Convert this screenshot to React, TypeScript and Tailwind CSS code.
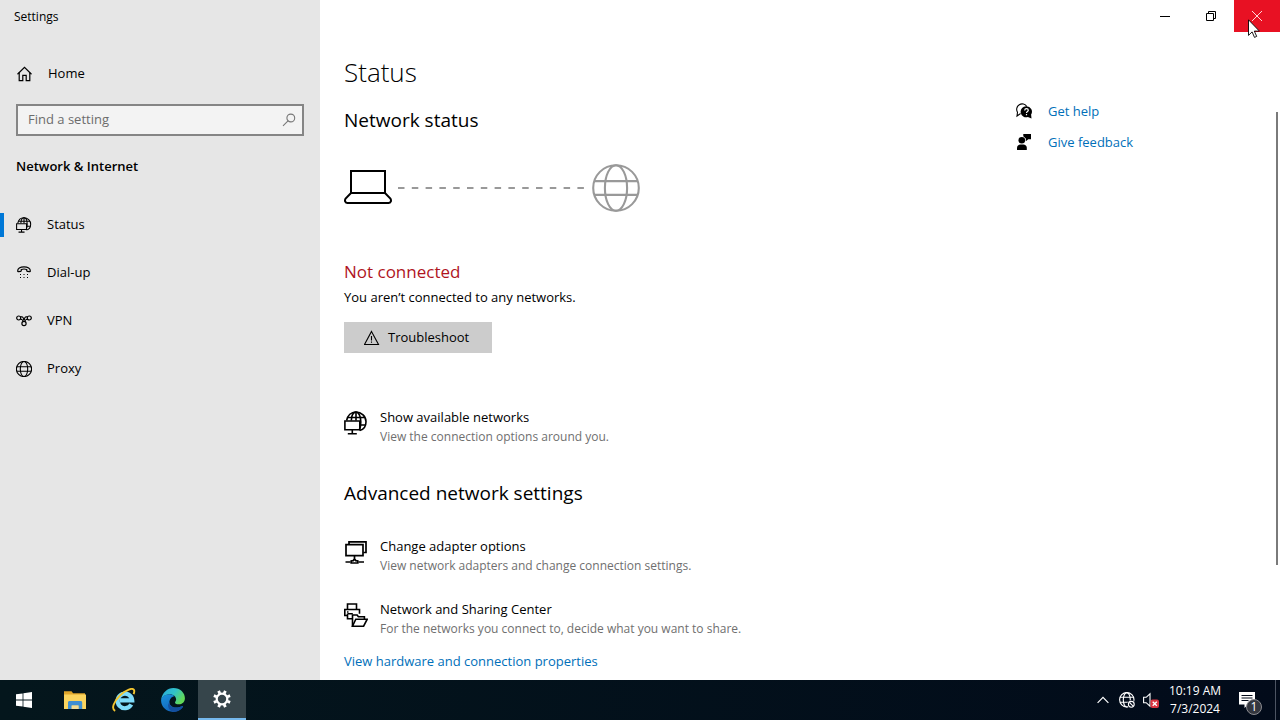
import type { ReactNode } from 'react';

type IconProps = { className?: string };

function HomeIcon({ className }: IconProps) {
  return (
    <svg viewBox="0 0 16 16" className={className} fill="none" stroke="currentColor" strokeWidth="1.200">
      <path d="M1.500 8.200 8.500 1.300l7 6.900" />
      <path d="M3.200 6.600v8h3.600V9.400h3.400v5.200h3.600v-8" />
    </svg>
  );
}

function SearchIcon({ className }: IconProps) {
  return (
    <svg viewBox="0 0 14 14" className={className} fill="none" stroke="currentColor" strokeWidth="1.1">
      <circle cx="8.8" cy="5" r="3.9" />
      <path d="M6 7.8 1 12.8" />
    </svg>
  );
}

function NetworkGlobeIcon({ className }: IconProps) {
  return (
    <svg viewBox="0 0 24 24" className={className} fill="none" stroke="currentColor" strokeWidth="1.600">
      <path d="M2.600 9.500C3.600 4.500 7.200 1 11.800 1 17.500 1 22 5.300 22 10.700c0 4.400-2.600 7.800-6.300 8.900" />
      <path d="M7.300 9.500C7.500 4.700 9.300 1.100 12 1.100S16.800 5.400 16.800 11c0 3.600-.6 6.300-1.600 8.100" />
      <path d="M12 1.100v8.400M3.800 6.500h17.300M15.800 14h5.500" />
      <path d="M.9 10h14.900v8.700H.9zM8.300 18.700v3.500M3.800 22.700h9" />
    </svg>
  );
}

function DialUpIcon({ className }: IconProps) {
  return (
    <svg viewBox="0 0 16 16" className={className} fill="none" stroke="currentColor" strokeWidth="1.200">
      <path d="M1.700 6C1.600 3.600 4 1.900 8 1.900S14.400 3.600 14.300 6c0 .6-.4.8-.9.700l-2-.4c-.5-.1-.7-.4-.7-.9v-.9c-1.600-.6-3.800-.6-5.400 0v.9c0 .5-.2.8-.7.900l-2 .4c-.5.1-.9-.1-.9-.7Z" />
      <path
        d="M4 9.500h1M7.500 9.500h1M11 9.500h1M4 12.500h1M7.500 12.500h1M11 12.500h1"
        strokeWidth="1"
      />
    </svg>
  );
}

function VpnIcon({ className }: IconProps) {
  return (
    <svg viewBox="0 0 16 16" className={className} fill="none" stroke="currentColor" strokeWidth="1.200">
      <circle cx="2.700" cy="5" r="2" />
      <circle cx="13.300" cy="5" r="2" />
      <path d="M4.300 3.700 6.500 4l3.300 4.300M11.700 3.700 9.500 4 6.200 8.300M4.400 6.300l2 .2M11.600 6.300l-2 .2" />
      <circle cx="8" cy="10.500" r="2.100" />
    </svg>
  );
}

function GlobeIcon({ className, strokeWidth = 1.1 }: IconProps & { strokeWidth?: number }) {
  return (
    <svg viewBox="0 0 16 16" className={className} fill="none" stroke="currentColor" strokeWidth={strokeWidth}>
      <circle cx="8" cy="8" r="7.600" />
      <ellipse cx="8" cy="8" rx="3.700" ry="7.600" />
      <path d="M.8 5.700h14.400M.8 10.300h14.400" />
    </svg>
  );
}

function LaptopIcon({ className }: IconProps) {
  return (
    <svg viewBox="0 0 48 48" className={className} fill="none" stroke="currentColor" strokeWidth="2">
      <path d="M7 29V7h34v22" />
      <path d="M7 29h34l5.400 5.600c1.300 2.200.3 4.400-1.900 4.400h-41c-2.200 0-3.200-2.200-1.900-4.400Z" />
    </svg>
  );
}

function WarningIcon({ className }: IconProps) {
  return (
    <svg viewBox="0 0 16 16" className={className} fill="none" stroke="currentColor" strokeWidth="1.100">
      <path d="M7.500 1.500 14.500 14.500H.5Z" />
      <path d="M7.500 6v4.500M7.500 11.600v1.200" />
    </svg>
  );
}

function AdapterIcon({ className }: IconProps) {
  return (
    <svg viewBox="0 0 24 24" className={className} fill="none" stroke="currentColor" strokeWidth="1.700">
      <path d="M5 4V1.800h17v10.700h-2.600" />
      <path d="M2 4.600h17v11H2zM10.500 15.600v3M1.500 22h5M14.500 22h5.500" />
      <path d="M7.200 23v-2.100l2-.3 1.300-1.700 1.300 1.700 2 .3V23z" />
    </svg>
  );
}

function SharingIcon({ className }: IconProps) {
  return (
    <svg viewBox="0 0 24 24" className={className} fill="none" stroke="currentColor" strokeWidth="1.600">
      <path d="M3.500 6.500V1h9v5.500M3.500 12.500H.8v-6h14.700v4.300M3 9h1.500" />
      <path d="M3.500 10.800h5.300M3.500 10.800v5h4.600" />
      <path d="M8.500 23.200V12h4.600l1.300 1.800h6v2.400" />
      <path d="M8.500 23.200 11.800 16.200h11.400l-3.600 7z" />
    </svg>
  );
}

function HelpIcon({ className }: IconProps) {
  return (
    <svg viewBox="0 0 16 16" className={className} fill="none" stroke="currentColor">
      <path d="M4.600 10.500 1 13l.5-3.800A5.300 5.300 0 1 1 10.800 3.500" strokeWidth="1.100" />
      <path
        d="M10.400 3.200a5.500 5.500 0 0 1 4.700 8.400l.4 4-3.600-1.700a5.500 5.500 0 1 1-1.500-10.700Z"
        fill="currentColor"
        stroke="none"
      />
      <path d="M8.700 7.400c0-2.300 3.600-2.200 3.600-.1 0 1.300-1.800 1.300-1.800 2.700M10.500 11v1.300" stroke="white" strokeWidth="1.200" />
    </svg>
  );
}

function FeedbackIcon({ className }: IconProps) {
  return (
    <svg viewBox="0 0 16 16" className={className} fill="currentColor">
      <circle cx="5.800" cy="6.200" r="3.300" />
      <path d="M1 16v-2.200c0-2 1.500-3.400 3.500-3.400h2.800c2 0 3.500 1.400 3.500 3.400V16Z" />
      <path d="M7.300 0H15v5.200h-2.700L9.800 7.200V4.500L7.300 2.200Z" />
    </svg>
  );
}

function WindowsLogo() {
  return (
    <svg viewBox="0 0 16 16" className="size-4" fill="white">
      <path d="M0 2.300 6.600 1.400v6.200H0ZM7.400 1.300 16 0v7.600H7.400ZM0 8.400h6.600v6.200L0 13.700ZM7.400 8.400H16V16l-8.600-1.300Z" />
    </svg>
  );
}

function ExplorerLogo() {
  return (
    <svg viewBox="0 0 24 24" className="size-6">
      <path d="M1 3.200h7.500l1.600 2H22v4H1Z" fill="#e0a52a" />
      <path d="M1 6.500h22V21H1Z" fill="#fbd45e" />
      <path d="M5 21v-6.500c0-1 .6-1.600 1.600-1.600h11c1 0 1.600.6 1.600 1.600V21h-3.700v-3.500H8.700V21Z" fill="#3f8fd2" />
      <path d="M8.700 17.500h6.800V21H8.700Z" fill="#f3dc94" />
    </svg>
  );
}

function InternetExplorerLogo() {
  return (
    <svg viewBox="0 0 24 24" className="size-6" fill="none">
      <path d="M19.300 16.500a7.300 7.300 0 1 1 .9-4.200H8" stroke="#7fdcfa" strokeWidth="4.200" />
      <path
        d="M3.200 22.800C-1 21 1.500 13.600 8.200 7.200 14 1.700 20.700-.6 22 2c.5 1 .3 2.500-.4 4.200"
        stroke="#f3c52f"
        strokeWidth="1.900"
      />
    </svg>
  );
}

function EdgeLogo() {
  return (
    <svg viewBox="0 0 24 24" className="size-[26px]">
      <defs>
        <linearGradient id="edgeTop" x1="0" y1="0" x2="1" y2="0.500">
          <stop offset="0" stopColor="#2aa5e0" />
          <stop offset="0.550" stopColor="#30c3c8" />
          <stop offset="1" stopColor="#62d957" />
        </linearGradient>
        <linearGradient id="edgeBody" x1="0" y1="0" x2="0.600" y2="1">
          <stop offset="0" stopColor="#1b93dd" />
          <stop offset="1" stopColor="#1160b8" />
        </linearGradient>
      </defs>
      <path
        d="M1 11.500C2.300 5.200 6.700 1 12.400 1 18.700 1 23 5.500 23 10.400c0 3.400-2.500 5.600-5.600 5.600-2.500 0-3.900-.9-3.500-1.900.5-.9 1-1.600 1-2.700 0-2.600-2.500-4.800-6-4.800-3.700 0-6.500 2-7.900 4.900Z"
        fill="url(#edgeTop)"
      />
      <path
        d="M1 12.800C.9 9.300 4.200 6.600 8.900 6.600c2 0 3.500.8 4.500 1.900-3 .4-4.700 3-4.700 5.600 0 4.300 5.500 6.400 11.600 3.600.7-.3 1.200.2.800.8A11.300 11.300 0 0 1 12.200 23C5.900 23 1.100 18.500 1 12.800Z"
        fill="url(#edgeBody)"
      />
      <path d="M8.700 14.100c0 4.300 5.500 6.400 11.600 3.600.7-.3 1.200.2.800.8-2 3.300-5.400 4.500-8 4.500-4.600-.6-7.300-5.500-4.400-8.900Z" fill="#144f9e" />
    </svg>
  );
}

function GearIcon() {
  const teeth = [0, 45, 90, 135, 180, 225, 270, 315];
  return (
    <svg viewBox="0 0 20 20" className="size-5" fill="none" stroke="white">
      <circle cx="10" cy="10" r="5.300" strokeWidth="2.200" />
      {teeth.map((angle) => (
        <path key={angle} d="M10 4.200V1.200" strokeWidth="2.800" transform={`rotate(${angle + 22.5} 10 10)`} />
      ))}
    </svg>
  );
}

const navItems = [
  { label: 'Status', icon: <NetworkGlobeIcon className="size-4" />, active: true },
  { label: 'Dial-up', icon: <DialUpIcon className="size-4" /> },
  { label: 'VPN', icon: <VpnIcon className="size-4" /> },
  { label: 'Proxy', icon: <GlobeIcon className="size-4" /> },
];

function Sidebar() {
  return (
    <aside className="w-80 shrink-0 bg-[#e6e6e6]">
      <div className="flex h-[34px] items-center pl-[14px] text-xs">Settings</div>
      <a href="#home" className="mt-5 flex h-10 items-center gap-4 pl-4">
        <HomeIcon className="size-4" />
        Home
      </a>
      <form className="mx-4 mt-[10px] flex h-8 items-center border-2 border-[#858585] bg-[#f3f3f3] pr-[6px] pl-[10px]">
        <input
          type="text"
          aria-label="Find a setting"
          placeholder="Find a setting"
          className="min-w-0 flex-1 bg-transparent outline-none placeholder:text-[#6c6c6c]"
        />
        <SearchIcon className="size-[14px] text-[#777]" />
      </form>
      <h2 className="mt-5 pl-4 leading-5 font-semibold">Network &amp; Internet</h2>
      <nav className="mt-[25px]">
        {navItems.map((item) => (
          <a key={item.label} href={`#${item.label.toLowerCase()}`} className="flex h-12 items-center">
            <span className={item.active ? 'h-6 w-1 bg-[#0078d7]' : 'h-6 w-1'} />
            <span className="mr-[15px] ml-3">{item.icon}</span>
            {item.label}
          </a>
        ))}
      </nav>
    </aside>
  );
}

function WindowControls() {
  return (
    <div className="flex h-8 justify-end">
      <button type="button" aria-label="Minimize" className="grid w-[46px] place-items-center">
        <svg viewBox="0 0 10 10" className="size-[10px]" stroke="black">
          <path d="M0 5.500h10" />
        </svg>
      </button>
      <button type="button" aria-label="Restore" className="grid w-[46px] place-items-center">
        <svg viewBox="0 0 10 10" className="size-[10px]" fill="none" stroke="black">
          <path d="M.5 2.500h7v7h-7zM2.500 2.500v-2h7v7h-2" />
        </svg>
      </button>
      <button type="button" aria-label="Close" className="relative grid w-[46px] place-items-center bg-[#e81123]">
        <svg viewBox="0 0 10 10" className="size-[10px]" stroke="#ffd5d8">
          <path d="M0 0l10 10M10 0 0 10" />
        </svg>
        <svg viewBox="0 0 12 19" className="absolute top-[19px] left-[14px] z-10 h-[19px] w-3" fill="white" stroke="black" strokeWidth="0.900">
          <path d="M.5.800v15.600l3.600-3.500 2.400 5.500 2.200-1-2.400-5.300h5.100Z" />
        </svg>
      </button>
    </div>
  );
}

function SettingLink({ icon, title, description }: { icon: ReactNode; title: string; description: string }) {
  return (
    <a href="#details" className="flex items-start gap-3">
      <span className="pt-[3px]">{icon}</span>
      <span className="flex flex-col leading-[19px]">
        <span>{title}</span>
        <span className="text-xs leading-[19px] text-[#6f6f6f]">{description}</span>
      </span>
    </a>
  );
}

function StatusPage() {
  return (
    <main className="relative flex-1 bg-white">
      <WindowControls />
      <div className="flex pl-6">
        <div className="flex-1 pt-[22px]">
          <h1 className="text-[26px] leading-9 font-light">Status</h1>
          <h2 className="mt-4 text-[19px] leading-7">Network status</h2>
          <div className="mt-[30px] flex items-center">
            <LaptopIcon className="size-12" />
            <svg viewBox="0 0 188 2" className="mx-[6px] h-[2px] w-[188px]" stroke="#999" strokeWidth="2">
              <path d="M0 1h188" strokeDasharray="6.500 7.300" />
            </svg>
            <GlobeIcon className="size-12 text-[#999]" strokeWidth={0.7} />
          </div>
          <p className="mt-12 text-[17px] leading-6 text-[#b0141e]">Not connected</p>
          <p className="mt-px leading-6">You aren’t connected to any networks.</p>
          <button type="button" className="mt-[13px] flex h-[31px] items-center gap-2 bg-[#ccc] pr-[23px] pl-5">
            <WarningIcon className="size-4" />
            Troubleshoot
          </button>
          <div className="mt-[55px]">
            <SettingLink
              icon={<NetworkGlobeIcon className="size-6" />}
              title="Show available networks"
              description="View the connection options around you."
            />
          </div>
          <h2 className="mt-[33px] text-[19px] leading-7">Advanced network settings</h2>
          <div className="mt-[30px] flex flex-col gap-[25px]">
            <SettingLink
              icon={<AdapterIcon className="size-6" />}
              title="Change adapter options"
              description="View network adapters and change connection settings."
            />
            <SettingLink
              icon={<SharingIcon className="size-6" />}
              title="Network and Sharing Center"
              description="For the networks you connect to, decide what you want to share."
            />
          </div>
          <a href="#hardware" className="mt-[13px] inline-block leading-5 text-[#006fb9]">
            View hardware and connection properties
          </a>
        </div>
        <aside className="flex w-[264px] flex-col gap-[11px] pt-[69px] leading-5 text-[#006fb9]">
          <a href="#help" className="flex items-center gap-4">
            <HelpIcon className="size-4 text-black" />
            Get help
          </a>
          <a href="#feedback" className="flex items-center gap-4">
            <FeedbackIcon className="size-4 text-black" />
            Give feedback
          </a>
        </aside>
      </div>
      <div className="absolute top-28 right-[2px] h-2/3 w-[2px] bg-[#7a7a7a]" />
    </main>
  );
}

const pinnedApps = [
  { name: 'File Explorer', logo: <ExplorerLogo /> },
  { name: 'Internet Explorer', logo: <InternetExplorerLogo /> },
  { name: 'Microsoft Edge', logo: <EdgeLogo /> },
];

function Taskbar() {
  return (
    <footer className="flex h-10 items-stretch justify-between bg-linear-to-r from-[#04161c] to-[#020b1a] text-xs text-white">
      <div className="flex gap-px">
        <button type="button" aria-label="Start" className="mr-[2px] grid w-12 place-items-center">
          <WindowsLogo />
        </button>
        {pinnedApps.map((app) => (
          <button key={app.name} type="button" aria-label={app.name} className="grid w-12 place-items-center">
            {app.logo}
          </button>
        ))}
        <button
          type="button"
          aria-label="Settings"
          className="grid w-12 place-items-center border-b-2 border-[#76b9ed] bg-[#36454b]"
        >
          <GearIcon />
        </button>
      </div>
      <div className="flex items-center">
        <button type="button" aria-label="Show hidden icons" className="grid w-6 place-items-center">
          <svg viewBox="0 0 12 8" className="h-2 w-3" fill="none" stroke="white" strokeWidth="1.200">
            <path d="M.6 6.800 6 1.400l5.400 5.400" />
          </svg>
        </button>
        <button type="button" aria-label="Network" className="grid w-6 place-items-center">
          <svg viewBox="0 0 16 16" className="size-4" fill="none" stroke="white" strokeWidth="1.100">
            <circle cx="7.800" cy="7.800" r="7.200" />
            <ellipse cx="7.800" cy="7.800" rx="3.500" ry="7.200" />
            <path d="M1 5.300h13.600M1 10.300h13.600" />
            <circle cx="12.300" cy="12.300" r="4" fill="#020b1a" stroke="none" />
            <circle cx="12.300" cy="12.300" r="2.900" />
            <path d="m10.400 10.400 3.800 3.800" />
          </svg>
        </button>
        <button type="button" aria-label="Volume" className="grid w-6 place-items-center">
          <svg viewBox="0 0 16 16" className="size-4" fill="none">
            <path d="M.6 5.300h2.600L7 1.800v12.400l-3.800-3.500H.6Z" stroke="white" strokeWidth="1.100" />
            <rect x="7.500" y="7.500" width="8.500" height="8.500" rx="2" fill="#d9333f" />
            <path d="m9.700 9.700 4.100 4.100M13.800 9.700l-4.100 4.100" stroke="white" strokeWidth="1.300" />
          </svg>
        </button>
        <button type="button" className="w-16 text-center leading-[18px] whitespace-nowrap">
          10:19 AM
          <br />
          7/3/2024
        </button>
        <button type="button" aria-label="Notifications" className="relative h-10 w-12">
          <svg viewBox="0 0 16 16" className="absolute top-3 left-3 size-4">
            <path d="M0 0h16v12.500h-7L5.500 16v-3.500H0Z" fill="white" />
            <path d="M2.500 3.500h11M2.500 6h11M2.500 8.500h7" stroke="#020b1a" strokeWidth="1.100" />
          </svg>
          <span className="absolute top-[19px] left-[19px] grid size-4 place-items-center rounded-full border border-[#8b8b90] bg-[#34373f] leading-none">
            1
          </span>
        </button>
        <div className="mr-1 h-full w-px bg-[#4c5462]" />
      </div>
    </footer>
  );
}

export default function App() {
  return (
    <div className="flex min-h-screen flex-col font-['Open_Sans','Noto_Sans',sans-serif] text-[13px] text-black">
      <div className="flex flex-1">
        <Sidebar />
        <StatusPage />
      </div>
      <Taskbar />
    </div>
  );
}
